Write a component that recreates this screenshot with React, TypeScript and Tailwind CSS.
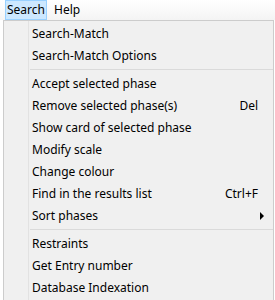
import { ReactNode } from 'react';

type Entry =
  | { kind: 'item'; label: string; shortcut?: string; submenu?: boolean }
  | { kind: 'sep' };

const entries: Entry[] = [
  { kind: 'item', label: 'Search-Match' },
  { kind: 'item', label: 'Search-Match Options' },
  { kind: 'sep' },
  { kind: 'item', label: 'Accept selected phase' },
  { kind: 'item', label: 'Remove selected phase(s)', shortcut: 'Del' },
  { kind: 'item', label: 'Show card of selected phase' },
  { kind: 'item', label: 'Modify scale' },
  { kind: 'item', label: 'Change colour' },
  { kind: 'item', label: 'Find in the results list', shortcut: 'Ctrl+F' },
  { kind: 'item', label: 'Sort phases', submenu: true },
  { kind: 'sep' },
  { kind: 'item', label: 'Restraints' },
  { kind: 'item', label: 'Get Entry number' },
  { kind: 'item', label: 'Database Indexation' },
];

const BarItem = ({ children, active }: { children: ReactNode; active?: boolean }) => (
  <div
    className={
      active
        ? 'h-[20px] px-[1px] flex items-center border border-[#99d1ff] bg-[#cce8ff]'
        : 'h-[20px] px-[2px] flex items-center border border-transparent'
    }
  >
    {children}
  </div>
);

export default function App() {
  return (
    <div
      className="w-[275px] h-[300px] bg-white overflow-hidden text-[12px] text-black"
      style={{ fontFamily: '"Noto Sans", "Open Sans", sans-serif' }}
    >
      <div className="h-[20px] flex items-start pl-[5px] gap-[4px] bg-gradient-to-b from-white to-[#f4f4f4]">
        <BarItem active>Search</BarItem>
        <BarItem>Help</BarItem>
      </div>

      <div className="ml-[3px] w-[271px] h-[290px] border border-[#cccccc] bg-[#f0f0f0] flex">
        <div className="w-[25px] border-r border-[#e2e2e2] shrink-0" />
        <div className="flex-1 pt-[2px]">
          {entries.map((e, i) =>
            e.kind === 'sep' ? (
              <div key={i} className="h-[6px] pt-[2px] pl-[1px]">
                <div className="h-px bg-[#dadada]" />
              </div>
            ) : (
              <div key={i} className="h-[22px] flex items-center pl-[3px] pr-[15px]">
                <span className="flex-1 whitespace-nowrap">{e.label}</span>
                {e.shortcut && <span className="whitespace-nowrap">{e.shortcut}</span>}
                {e.submenu && (
                  <span className="w-0 h-0 mr-[-6px] border-y-[4px] border-y-transparent border-l-[4px] border-l-black" />
                )}
              </div>
            )
          )}
        </div>
      </div>
    </div>
  );
}
